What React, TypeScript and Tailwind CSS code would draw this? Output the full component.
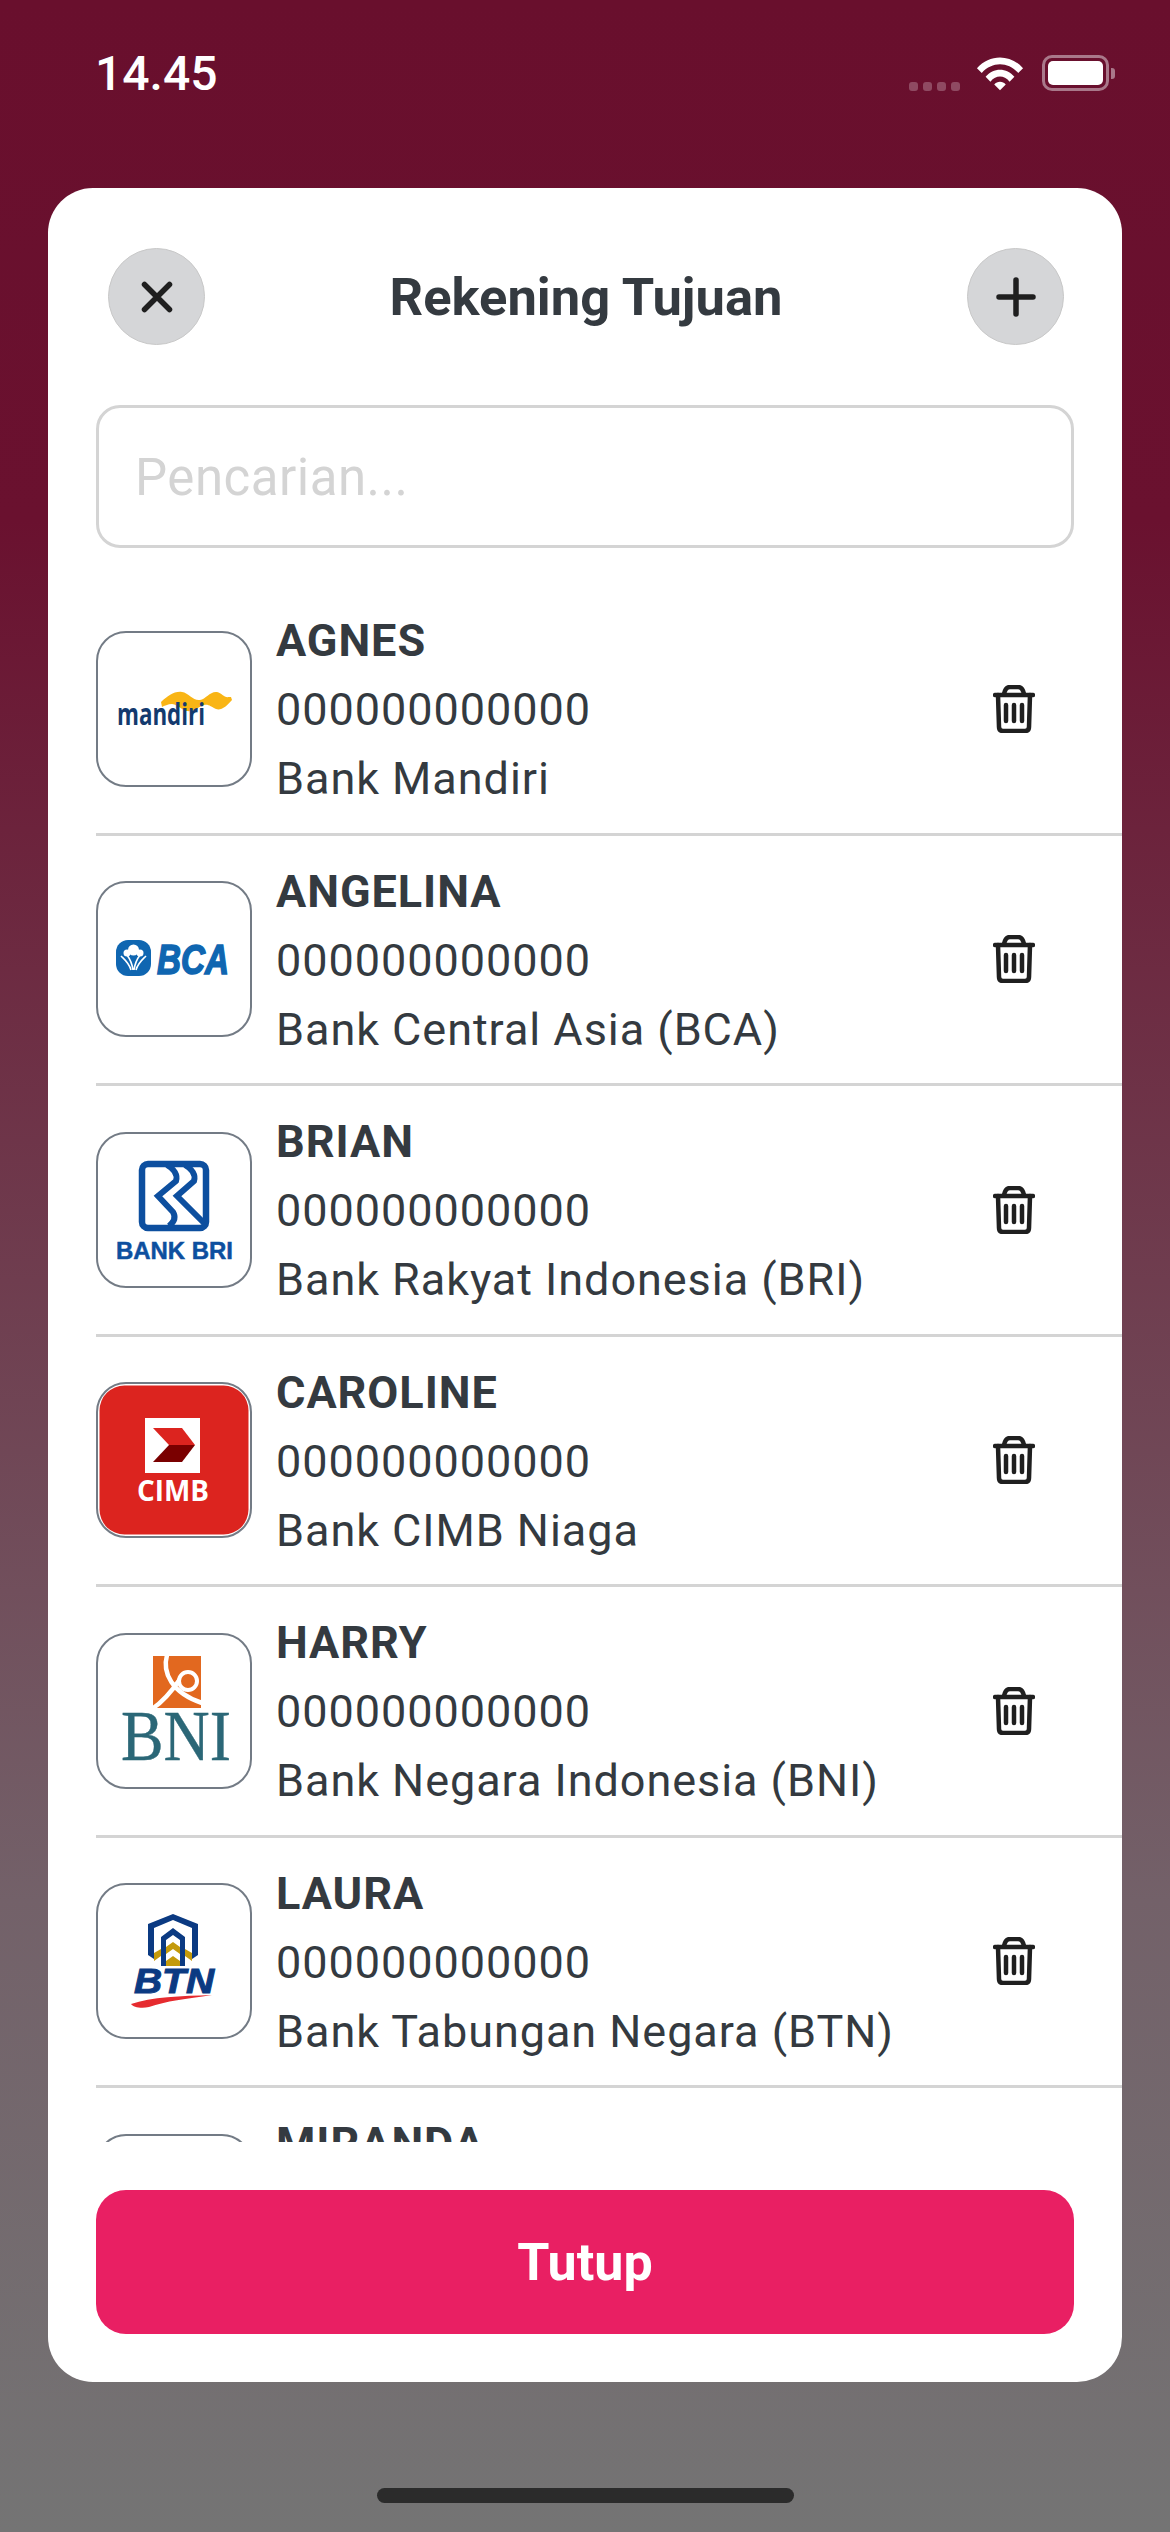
const rows = [
  { name: "AGNES", bank: "Bank Mandiri", logo: "mandiri" },
  { name: "ANGELINA", bank: "Bank Central Asia (BCA)", logo: "bca" },
  { name: "BRIAN", bank: "Bank Rakyat Indonesia (BRI)", logo: "bri" },
  { name: "CAROLINE", bank: "Bank CIMB Niaga", logo: "cimb" },
  { name: "HARRY", bank: "Bank Negara Indonesia (BNI)", logo: "bni" },
  { name: "LAURA", bank: "Bank Tabungan Negara (BTN)", logo: "btn" },
  { name: "MIRANDA", bank: "Bank Mandiri", logo: "none" },
];

function Logo({ kind }: { kind: string }) {
  const cls = "block w-[156px] h-[156px] -m-[2px] max-w-none";
  if (kind === "mandiri")
    return (
      <svg viewBox="0 0 156 156" className={cls}>
        <path d="M65 71 C72 65 78 60 86 61 C93 62 97 70 104 69 C110 68 114 60 121 61 C126 62 128 67 133 66 L135 66 L136 69 C131 75 125 80 120 78 C115 76 113 73 108 74 C102 76 98 81 91 80 C85 79 83 74 76 73 C72 73 68 75 66 76 Z" fill="#f9b515" />
        <text x="21" y="94" fontFamily="'Open Sans', sans-serif" fontWeight="700" fontSize="31" fill="#133a6e" textLength="88" lengthAdjust="spacingAndGlyphs">mandiri</text>
      </svg>
    );
  if (kind === "bca")
    return (
      <svg viewBox="0 0 156 156" className={cls}>
        <rect x="20" y="59" width="35" height="36" rx="12" fill="#0f66b1" />
        <circle cx="37.5" cy="69" r="5.5" fill="#fff" />
        <circle cx="31" cy="72" r="3.5" fill="#fff" />
        <circle cx="44" cy="72" r="3.5" fill="#fff" />
        <path d="M25 75 C29 79 33 82 35 89 M50 75 C46 79 42 82 40 89 M31 74 C34 78 36 82 37 89 M44 74 C41 78 39 82 38 89" stroke="#fff" strokeWidth="1.6" fill="none" />
        <text x="61" y="93" fontFamily="'Liberation Sans', sans-serif" fontWeight="700" fontStyle="italic" fontSize="42" fill="#0f66b1" stroke="#0f66b1" strokeWidth="1.6" textLength="72" lengthAdjust="spacingAndGlyphs">BCA</text>
      </svg>
    );
  if (kind === "bri")
    return (
      <svg viewBox="0 0 156 156" className={cls}>
        <rect x="46" y="32" width="64" height="64" rx="6" fill="#fff" stroke="#0d4f9f" strokeWidth="6.5" />
        <path d="M71 33 C78 37 82 43 80 49 L62 64 L77 80 C80 85 78 90 73 94 M89 33 C96 37 100 43 98 49 L81 64 L108 91" fill="none" stroke="#0d4f9f" strokeWidth="6" />
        <text x="20" y="127" fontFamily="'Liberation Sans', sans-serif" fontWeight="700" fontSize="24" fill="#0d4f9f" stroke="#0d4f9f" strokeWidth="0.5" textLength="117" lengthAdjust="spacingAndGlyphs">BANK BRI</text>
      </svg>
    );
  if (kind === "cimb")
    return (
      <svg viewBox="0 0 156 156" className={cls}>
        <rect x="3.5" y="3.5" width="149" height="149" rx="25" fill="#dc241f" />
        <rect x="49" y="36" width="55" height="55" fill="#fff" />
        <path d="M57 46 H86 L99 63 H73 Z" fill="#dc241f" />
        <path d="M73 63 H99 L86 80 H57 Z" fill="#7a0000" />
        <text x="41" y="119" fontFamily="'Open Sans', sans-serif" fontWeight="700" fontSize="28" fill="#fff" textLength="72" lengthAdjust="spacingAndGlyphs">CIMB</text>
      </svg>
    );
  if (kind === "bni")
    return (
      <svg viewBox="0 0 156 156" className={cls}>
        <rect x="57" y="23" width="48" height="52" fill="#e2681f" />
        <path d="M71 22 C66 40 76 60 106 70 M56 76 C68 68 76 58 84 46" stroke="#fff" strokeWidth="4.5" fill="none" />
        <circle cx="92" cy="48" r="9" fill="#e2681f" stroke="#fff" strokeWidth="4" />
        <text x="25" y="127" fontFamily="'Liberation Serif', serif" fontSize="71" fill="#2b6777" stroke="#2b6777" strokeWidth="0.4" textLength="110" lengthAdjust="spacingAndGlyphs">BNI</text>
      </svg>
    );
  if (kind === "btn")
    return (
      <svg viewBox="0 0 156 156" className={cls}>
        <path d="M58 70 L65 66 V73 L58 78 Z M89 66 L96 70 V78 L89 73 Z" fill="#c49a0b" />
        <path d="M70 64 L77 59 L84 64 V71 L77 66 L70 71 Z M70 78 L77 73 L84 78 V83 H70 Z" fill="#c49a0b" />
        <path d="M52 72 V41 L77 31 L102 41 V72 L96 76 V45 L77 37 L58 45 V76 L52 72 Z" fill="#0b3a82" />
        <path d="M65 83 V54 L77 45 L89 54 V83 H84 V57 L77 52 L70 57 V83 Z" fill="#0b3a82" />
        <text x="38" y="110" fontFamily="'Liberation Sans', sans-serif" fontWeight="700" fontStyle="italic" fontSize="35" fill="#0b3a82" stroke="#0b3a82" strokeWidth="1" textLength="80" lengthAdjust="spacingAndGlyphs">BTN</text>
        <path d="M35 121 C55 114 85 113 116 112 C90 116 70 118 53 124 C45 126 37 124 35 121 Z" fill="#e62b2f" />
      </svg>
    );
  return null;
}

function Trash() {
  return (
    <svg viewBox="0 0 42 48" className="w-[42px] h-[48px]" fill="none" stroke="#1f1f1f" strokeWidth="4.5" strokeLinecap="round" strokeLinejoin="round">
      <path d="M2 10 H40" />
      <path d="M11 9 C12 4 14 2 17 2 H25 C28 2 30 4 31 9" />
      <path d="M5 10 L6 42 C6 45 8 46 10 46 H32 C34 46 36 45 36 42 L37 10" />
      <path d="M13 20 V36 M21 20 V36 M29 20 V36" />
    </svg>
  );
}

export default function App() {
  return (
    <div className="relative w-[1170px] h-[2532px] overflow-hidden bg-[linear-gradient(180deg,#690f2d_0px,#6a112f_520px,#736169_1900px,#747474_2532px)] font-['Roboto',sans-serif]">
      <div className="h-[188px] pl-[95px] pr-[55px] flex justify-between items-start">
        <span className="mt-[47px] text-[48px] leading-[54px] font-medium text-white">14.45</span>
        <div className="mt-[55px] flex items-end">
          <div className="flex gap-[5px]">
            <span className="w-[9px] h-[9px] rounded-[3px] bg-[#8f4a62]" />
            <span className="w-[9px] h-[9px] rounded-[3px] bg-[#8f4a62]" />
            <span className="w-[9px] h-[9px] rounded-[3px] bg-[#8f4a62]" />
            <span className="w-[9px] h-[9px] rounded-[3px] bg-[#8f4a62]" />
          </div>
          <svg viewBox="0 0 50 36" className="ml-[16px] w-[48px] h-[36px]" fill="white">
            <path d="M1 13 C14 -2 36 -2 49 13 L44 18 C33 6 17 6 6 18 Z" />
            <path d="M10 22 C18 12 32 12 40 22 L35 27 C29 20 21 20 15 27 Z" />
            <path d="M19 30 C22 26 28 26 31 30 L25 36 Z" />
          </svg>
          <div className="ml-[18px] flex items-center gap-[2px]">
            <div className="w-[67px] h-[36px] rounded-[10px] border-[3px] border-[#a9788a] p-[3px]">
              <div className="w-full h-full rounded-[5px] bg-white" />
            </div>
            <span className="w-[4px] h-[11px] rounded-r-[3px] bg-[#a9788a]" />
          </div>
        </div>
      </div>

      <div className="mx-[48px] h-[2194px] rounded-[45px] bg-white flex flex-col">
        <div className="mt-[60px] ml-[60px] mr-[58px] flex items-center justify-between h-[97px]">
          <div className="w-[97px] h-[97px] rounded-full bg-[#d5d6d8] border border-[#c8c8c8] flex items-center justify-center">
            <svg viewBox="0 0 32 32" className="w-[32px] h-[32px]" stroke="#1f1f1f" strokeWidth="5.5" strokeLinecap="round"><path d="M3.5 3.5 L28.5 28.5 M28.5 3.5 L3.5 28.5" /></svg>
          </div>
          <span className="mt-[1px] text-[52.5px] leading-[60px] font-bold text-[#343a40]">Rekening Tujuan</span>
          <div className="w-[97px] h-[97px] rounded-full bg-[#d5d6d8] border border-[#c8c8c8] flex items-center justify-center">
            <svg viewBox="0 0 40 40" className="w-[40px] h-[40px]" stroke="#1f1f1f" strokeWidth="5.5" strokeLinecap="round"><path d="M20 3 V37 M3 20 H37" /></svg>
          </div>
        </div>

        <div className="mt-[60px] mx-[48px] h-[143px] rounded-[24px] border-[3px] border-[#d4d4d4] flex items-center px-[36px]">
          <span className="mt-[2px] text-[51px] leading-[60px] text-[#d4d4d4] tracking-[0.5px]">Pencarian...</span>
        </div>

        <div className="mt-[37px] ml-[48px] h-[1557px] overflow-hidden">
          {rows.map((r) => (
            <div key={r.name} className="h-[250.5px] border-b-[3px] border-[#d4d4d4] flex items-center">
              <div className="w-[156px] h-[156px] shrink-0 rounded-[30px] border-2 border-[#737b85] bg-white overflow-hidden">
                <Logo kind={r.logo} />
              </div>
              <div className="ml-[24px] pt-[2px] flex-1 text-[#343a40] text-[45px] leading-[69px] tracking-[0.95px]">
                <div className="font-bold">{r.name}</div>
                <div>000000000000</div>
                <div>{r.bank}</div>
              </div>
              <div className="mr-[87px]">
                <Trash />
              </div>
            </div>
          ))}
        </div>

        <div className="mt-[48px] mx-[48px] h-[144px] rounded-[30px] bg-[#e91f63] flex items-center justify-center">
          <span className="mt-[2px] text-[52px] leading-[60px] font-bold text-white">Tutup</span>
        </div>
      </div>

      <div className="mt-[106px] mx-auto w-[417px] h-[15px] rounded-full bg-[#2b2b2b]" />
    </div>
  );
}
